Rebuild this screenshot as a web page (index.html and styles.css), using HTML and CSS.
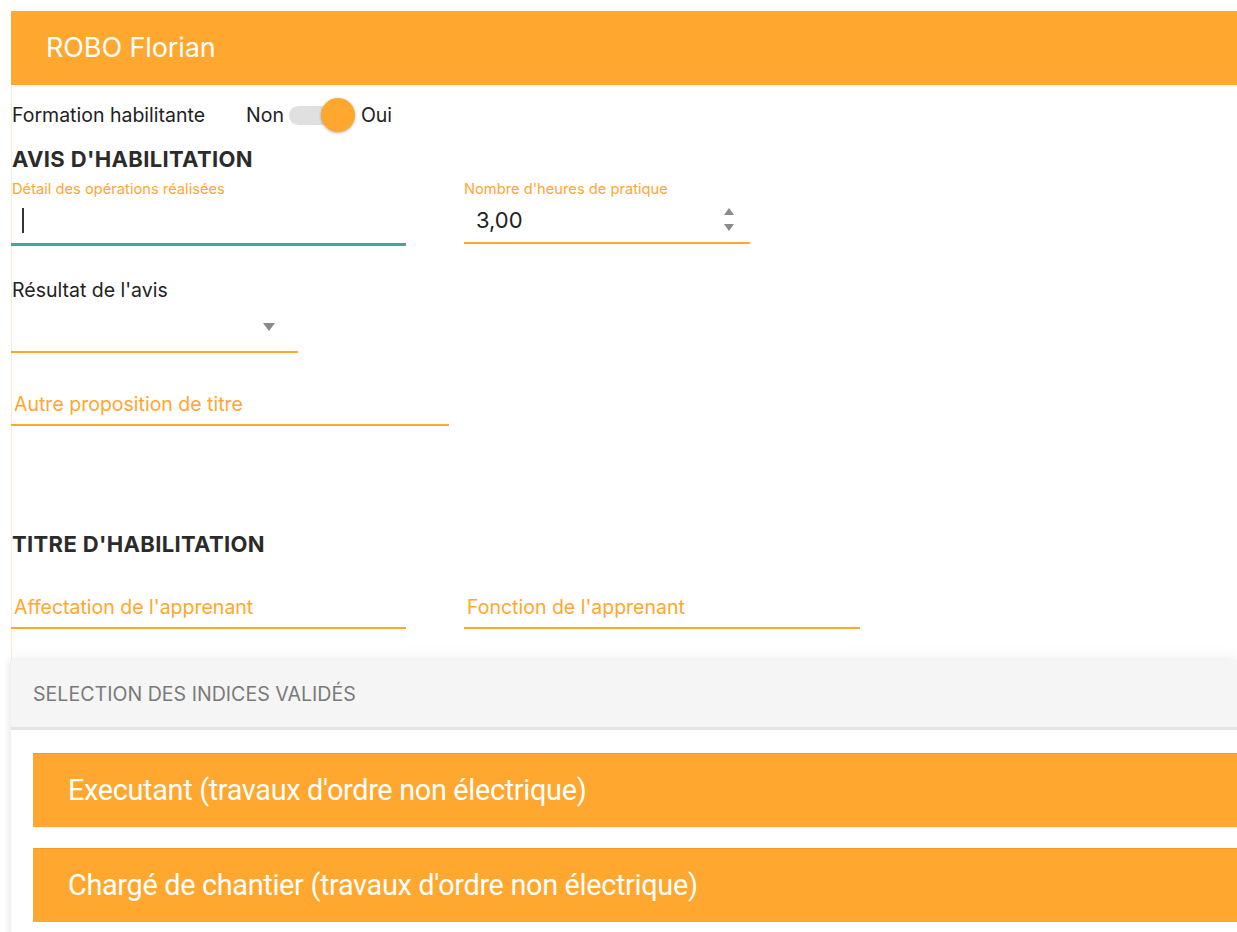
FILE: index.html
```html
<!DOCTYPE html>
<html lang="fr">
<head>
<meta charset="utf-8">
<title>ROBO Florian</title>
<link rel="stylesheet" href="styles.css">
</head>
<body>
<div class="page">
  <div class="banner">ROBO Florian</div>
  <div class="content">
    <div class="toggle-row">
      <span class="toggle-label">Formation habilitante</span>
      <span class="opt">Non</span>
      <span class="switch"><span class="track"></span><span class="thumb"></span></span>
      <span class="opt">Oui</span>
    </div>
    <h2 class="section-title">AVIS D'HABILITATION</h2>
    <div class="field-row">
      <div class="field w-detail">
        <div class="small-label">Détail des opérations réalisées</div>
        <div class="input focused"><span class="caret"></span></div>
      </div>
      <div class="field w-hours">
        <div class="small-label">Nombre d'heures de pratique</div>
        <div class="input number"><span class="value">3,00</span>
          <span class="spin"><svg width="12" height="26" viewBox="0 0 12 26"><path d="M6 1 L11 8 L1 8 Z" fill="#8a8a8a"/><path d="M1 17 L11 17 L6 24 Z" fill="#8a8a8a"/></svg></span>
        </div>
      </div>
    </div>
    <div class="select-block">
      <div class="plain-label">Résultat de l'avis</div>
      <div class="select"><svg width="12" height="9" viewBox="0 0 12 9"><path d="M0 1 L12 1 L6 9 Z" fill="#8a8a8a"/></svg></div>
    </div>
    <div class="ph-field w-autre"><span>Autre proposition de titre</span></div>
    <h2 class="section-title titre">TITRE D'HABILITATION</h2>
    <div class="field-row ph-row">
      <div class="ph-field w-affect"><span>Affectation de l'apprenant</span></div>
      <div class="ph-field w-fonction"><span>Fonction de l'apprenant</span></div>
    </div>
    <div class="panel">
      <div class="panel-head">SELECTION DES INDICES VALIDÉS</div>
      <div class="panel-body">
        <div class="indice">Executant (travaux d'ordre non électrique)</div>
        <div class="indice">Chargé de chantier (travaux d'ordre non électrique)</div>
      </div>
    </div>
  </div>
</div>
</body>
</html>
```
FILE: styles.css
```css
html, body { margin: 0; padding: 0; background: #fff; }
body { font-family: Inter, "Noto Sans", sans-serif; color: #222; overflow: hidden; }
.page { padding: 11px 0 0 11px; }
.banner {
  background: #ffa72e; color: #fff; height: 74px; box-sizing: border-box;
  padding-left: 35px; font-size: 27px; line-height: 74px; letter-spacing: -0.1px;
}
.content { box-shadow: inset 1px 0 0 #fdebd8; }
.toggle-row { display: flex; align-items: center; height: 60px; font-size: 19.5px; }
.toggle-label { width: 234px; padding-left: 1px; }
.opt { color: #222; }
.switch { position: relative; width: 66px; height: 36px; margin: 0 6px 0 5px; display: inline-block; }
.track { position: absolute; left: 0; top: 9px; width: 62px; height: 19px; border-radius: 10px; background: #e0e0e0; }
.thumb { position: absolute; left: 32px; top: 1px; width: 34px; height: 34px; border-radius: 50%; background: #ffa72e; box-shadow: 0 1px 3px rgba(0,0,0,0.3); }
.section-title { margin: 0; padding-left: 1px; font-size: 22px; font-weight: 700; color: #2b2b2b; line-height: 28px; letter-spacing: 0.35px; }
.field-row { display: flex; }
.small-label { font-size: 14.7px; color: #ffa72e; line-height: 18px; margin-top: 7px; padding-left: 1px; }
.w-detail { width: 395px; margin-right: 58px; }
.w-hours { width: 286px; }
.w-hours .small-label { padding-left: 0; }
.input { box-sizing: border-box; display: flex; align-items: center; }
.input.focused { border-bottom: 3px solid #3aab96; height: 48px; }
.caret { display: block; width: 2px; height: 25px; background: #333; margin-left: 11px; margin-top: 0; }
.input.number { border-bottom: 2px solid #ffa72e; height: 46px; padding-left: 12px; justify-content: space-between; }
.value { font-size: 22px; color: #222; }
.spin { display: flex; margin-right: 15px; }
.select-block { margin-top: 32px; }
.plain-label { font-size: 19.5px; line-height: 24px; padding-left: 1px; }
.select { width: 287px; height: 49px; border-bottom: 2px solid #ffa72e; display: flex; align-items: center; justify-content: flex-end; }
.select svg { margin-right: 23px; }
.ph-field { border-bottom: 2px solid #ffa72e; height: 42px; display: flex; align-items: center; font-size: 19.5px; color: #ffa72e; box-sizing: border-box; }
.ph-field span { padding-left: 3px; }
.w-autre { width: 438px; margin-top: 31px; }
.titre { margin-top: 104px; }
.ph-row { margin-top: 29px; }
.w-affect { width: 395px; margin-right: 58px; }
.w-fonction { width: 396px; }
.panel { margin-top: 31px; box-shadow: 0 -6px 12px rgba(0,0,0,0.035), -3px 0 6px rgba(0,0,0,0.06); }
.panel-head { background: #f5f5f5; height: 70px; line-height: 68px; padding-left: 22px; font-size: 19.6px; color: #7a7a7a; border-bottom: 3px solid #e4e4e4; box-sizing: border-box; }
.panel-body { background: #fff; padding: 23px 0 20px 22px; display: flex; flex-direction: column; gap: 21px; }
.indice { background: #ffa72e; color: #fff; height: 74px; line-height: 72px; padding-left: 35px; font-family: Roboto, sans-serif; font-size: 28.8px; letter-spacing: -0.3px; border-top: 1px solid #f59a1e; box-sizing: border-box; }
```
